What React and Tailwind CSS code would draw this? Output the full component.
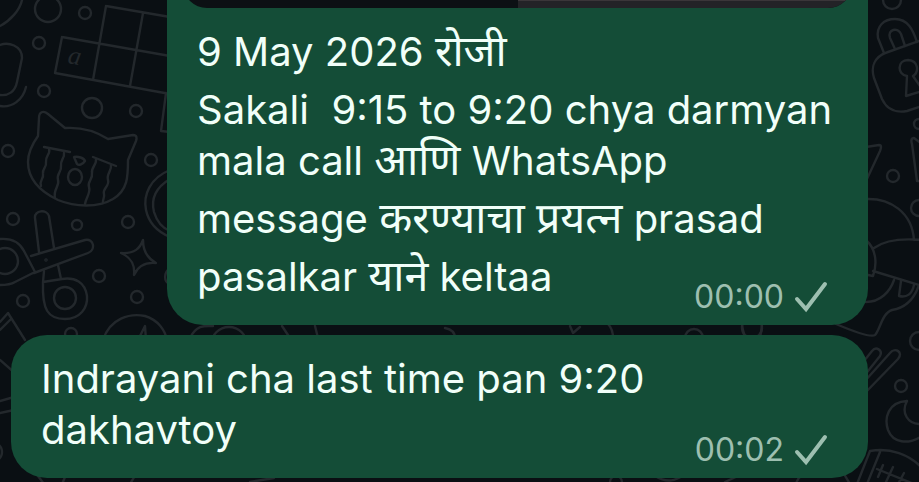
const firstMessage = [
  { text: [{ t: '9 May 2026 ' }, { t: 'रोजी', hi: true }] },
  { text: [{ t: 'Sakali  9:15 to 9:20 chya darmyan' }] },
  { text: [{ t: 'mala call ' }, { t: 'आणि', hi: true }, { t: ' WhatsApp' }] },
  { text: [{ t: 'message ' }, { t: 'करण्याचा प्रयत्न', hi: true }, { t: ' prasad' }] },
  { text: [{ t: 'pasalkar ' }, { t: 'याने', hi: true }, { t: ' keltaa' }] },
];

const secondMessage = [
  { text: [{ t: 'Indrayani cha last time pan 9:20' }] },
  { text: [{ t: 'dakhavtoy' }] },
];

// [cx, cy, r]
const dots = [
  [48, 9, 13], [85, 13, 6], [39, 43, 6], [44, 91, 6], [92, 108, 10], [136, 111, 6],
  [8, 151, 6], [151, 160, 6], [13, 219, 6], [77, 225, 5], [128, 222, 6], [5, 261, 13],
  [65, 298, 11], [99, 276, 6], [23, 301, 6], [137, 297, 6], [71, 334, 6], [892, 0, 9],
  [919, 124, 5], [893, 176, 6], [919, 208, 8], [919, 341, 9], [901, 386, 6],
  [229, 345, 18], [694, 338, 9], [752, 328, 10], [616, 482, 6], [-8, 452, 10],
];

function Wallpaper() {
  return (
    <svg
      aria-hidden="true"
      viewBox="0 0 919 482"
      preserveAspectRatio="xMidYMid slice"
      className="absolute inset-0 h-full w-full"
      fill="none"
      stroke="#23282c"
      strokeWidth="2.4"
      strokeLinecap="round"
      strokeLinejoin="round"
    >
      {dots.map(([cx, cy, r]) => (
        <circle key={`${cx}-${cy}`} cx={cx} cy={cy} r={r} />
      ))}

      {/* mug */}
      <path d="M22 0C20 10 10 21 0 26M0 45C8 42 22 45 22 58L17 82C15 92 8 96 0 95M26 87C23 100 12 108 0 106" />

      {/* crossword */}
      <path d="M106 6L170 17M62 37L170 56M55 73L170 94M106 6L93 80M143 13L130 86M62 37L55 73M166 93L161 131L170 132" />
      <text x="67" y="63" transform="rotate(10 67 63)" fontSize="26" fontStyle="italic" fill="#23282c" stroke="none" className="font-['Liberation_Serif',serif]">a</text>

      {/* crying cat */}
      <path d="M38 136L39 118C39 112 43 110 48 114L65 128C80 127 94 130 108 139L133 135C137 135 137 138 136 141L128 160C128 176 128 190 113 199C98 208 75 207 58 200C37 190 28 178 28 162C28 152 33 143 38 136Z" />
      <path d="M44 147L70 152M93 157L116 166" />
      <path d="M49 149C51 154 45 156 46 162C47 168 42 168 43 174C44 179 39 180 41 186M64 153C65 158 60 160 61 166C62 172 56 174 58 180C60 186 53 189 55 198M96 159C97 165 91 167 92 173C93 180 87 181 89 187C91 193 86 197 85 204M111 165C112 171 106 174 108 180C110 186 102 189 104 194C105 198 102 200 103 203" />
      <path d="M74 157C78 156 84 158 85 161C83 164 79 166 77 164Z" />
      <ellipse cx="75" cy="177" rx="7" ry="8" />

      {/* ring */}
      <path d="M170 170C150 178 143 195 146 210C149 224 158 232 170 237M170 179C155 188 151 200 154 212C157 222 162 228 170 231" />

      {/* scissors */}
      <path d="M39 252L35 218C34 210 47 209 49 216L54 248M31 256L85 240C94 238 96 250 88 253L34 273M0 239C12 238 20 243 24 251L35 272L15 282C10 285 5 285 0 285" />
      <path d="M44 271L43 282C42 310 48 319 65 319C80 319 88 308 87 296C85 282 75 277 62 279L43 282M58 265L61 279" />
      <circle cx="46" cy="260" r="0.6" />

      {/* sparkle */}
      <path d="M143 240C140 248 135 254 121 253C132 258 135 265 134 275C138 266 146 262 156 263C147 258 143 251 143 240Z" />

      {/* box and dial */}
      <path d="M0 322L8 313L25 340M0 330L10 320M0 360L16 374M0 401L14 397M0 413L14 410M170 268C164 272 163 282 170 284" />
      <path d="M103 340C110 318 130 313 145 316C158 320 165 330 167 340M138 340L145 326L146 340M190 338C197 324 206 326 213 326" />

      {/* padlock */}
      <path d="M884 53L878 38C876 26 884 19 895 19C908 19 913 30 917 42M895 49L890 38C887 29 898 27 901 34L905 46" />
      <path d="M922 40L888 52C873 57 871 68 874 78L882 99C887 110 897 113 907 111L922 106" />
      <path d="M907 76L906 96L922 91M907 76C897 75 897 60 908 60C919 61 919 72 913 76L920 86" />

      {/* party hats */}
      <path d="M866 147L879 145C882 145 881 148 880 151L866 181M922 144L914 138C911 138 911 141 912 144L917 181L922 181" />

      {/* helmet */}
      <path d="M866 199C890 198 912 212 914 240M866 240C877 250 877 265 873 276L868 275M874 248C885 240 900 238 922 240M873 271L922 286M894 280C890 292 880 302 866 302M901 281L899 296C907 298 912 294 914 285M919 285C914 300 905 308 892 310C882 313 880 330 875 335C870 338 850 330 836 324" />

      {/* drumsticks */}
      <path d="M864 361L872 351C876 346 883 350 880 356L864 376M864 382L890 353C895 347 904 352 898 359L864 394" />

      {/* moon */}
      <path d="M907 401C888 402 884 418 888 430C893 443 908 445 922 436M907 401C901 412 907 425 922 424" />

      {/* football */}
      <path d="M844 474L850 484M857 484L870 451C890 447 910 455 922 468M880 452L867 484M877 469L914 484M883 465L878 477M893 467L886 482M904 473L898 484" />

      {/* doodles between bubbles */}
      <path d="M282 326L290 338M315 326L318 338M570 326L573 333L580 327M608 324C612 328 613 332 613 338M742 326L745 338M762 326L760 338M445 328C455 330 455 336 455 338" />
      <path d="M38 476L44 484M66 474C64 480 62 484 62 484M130 484L136 474M250 482L274 478M655 476C668 484 676 480 684 475M725 482L742 474M796 484C798 476 804 474 808 474" />
    </svg>
  );
}

function Check() {
  return (
    <svg aria-hidden="true" viewBox="0 0 34 32" className="h-8 w-[34px]" fill="none" stroke="currentColor" strokeWidth="4">
      <path d="M3 18L12 28L31 3" strokeLinecap="round" />
    </svg>
  );
}

function Line({ parts }) {
  return (
    <p className="whitespace-pre">
      {parts.map((part) =>
        part.hi ? (
          <span key={part.t} lang="mr" className="font-['Noto_Sans_Devanagari','Noto_Sans',sans-serif] text-[43px] leading-none">
            {part.t}
          </span>
        ) : (
          <span key={part.t}>{part.t}</span>
        )
      )}
    </p>
  );
}

function Bubble({ lines, time, className, children }) {
  const last = lines[lines.length - 1];
  const hasHindi = (line) => line.text.some((p) => p.hi);

  return (
    <article className={`overflow-hidden bg-[#144d37] pb-2 text-[40px] leading-[51px] text-[#f1fff9] ${className}`}>
      {children}
      {lines.slice(0, -1).map((line, i) => (
        <div key={i} className={hasHindi(line) ? 'pb-[7px]' : ''}>
          <Line parts={line.text} />
        </div>
      ))}
      <div className="flex items-start justify-between">
        <Line parts={last.text} />
        <div className="mt-[26px] mr-[10px] flex items-center gap-[10px] text-[32px] leading-10 text-[#9dbfb0]">
          <time>{time}</time>
          <Check />
        </div>
      </div>
    </article>
  );
}

export default function App() {
  return (
    <div className="relative min-h-screen overflow-hidden bg-[#0a0f13] font-['Inter',sans-serif]">
      <Wallpaper />
      <main className="relative flex flex-col gap-[10px] pr-[51px] pl-[11px]">
        <Bubble lines={firstMessage} time="00:00" className="ml-[156px] rounded-b-[36px] px-[30px]">
          {/* bottom edge of the attached photo */}
          <div className="-mx-[14px] -mt-6 mb-[18px] flex h-8 overflow-hidden rounded-b-[24px] bg-[#0c1014]">
            <div className="w-1/2" />
            <div className="w-1/2 border-t-[25px] border-[#3a3639] bg-[#232327]" />
          </div>
        </Bubble>
        <Bubble lines={secondMessage} time="00:02" className="rounded-[36px] px-[30px] pt-[18px]" />
      </main>
    </div>
  );
}
